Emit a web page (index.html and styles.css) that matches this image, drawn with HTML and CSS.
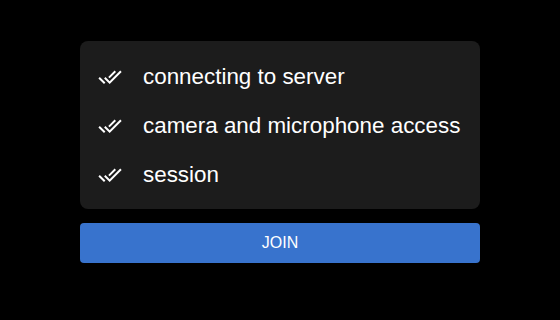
FILE: index.html
```html
<!DOCTYPE html>
<html>
<head>
<meta charset="utf-8">
<link rel="stylesheet" href="styles.css">
</head>
<body>
<div class="wrap">
  <div class="card">
    <div class="row">
      <svg class="icon" viewBox="0 0 24 24" width="24" height="24"><path fill="#fff" d="M18 7l-1.41-1.41-6.34 6.34 1.41 1.41L18 7zm4.24-1.41L11.66 16.17 7.48 12l-1.41 1.41L11.66 19l12-12-1.42-1.41zM.41 13.41L6 19l1.41-1.41L1.83 12 .41 13.41z"/></svg>
      <span class="label">connecting to server</span>
    </div>
    <div class="row">
      <svg class="icon" viewBox="0 0 24 24" width="24" height="24"><path fill="#fff" d="M18 7l-1.41-1.41-6.34 6.34 1.41 1.41L18 7zm4.24-1.41L11.66 16.17 7.48 12l-1.41 1.41L11.66 19l12-12-1.42-1.41zM.41 13.41L6 19l1.41-1.41L1.83 12 .41 13.41z"/></svg>
      <span class="label">camera and microphone access</span>
    </div>
    <div class="row">
      <svg class="icon" viewBox="0 0 24 24" width="24" height="24"><path fill="#fff" d="M18 7l-1.41-1.41-6.34 6.34 1.41 1.41L18 7zm4.24-1.41L11.66 16.17 7.48 12l-1.41 1.41L11.66 19l12-12-1.42-1.41zM.41 13.41L6 19l1.41-1.41L1.83 12 .41 13.41z"/></svg>
      <span class="label">session</span>
    </div>
  </div>
  <button class="join">JOIN</button>
</div>
</body>
</html>
```
FILE: styles.css
```css
html, body {
  margin: 0;
  padding: 0;
  background: #000;
  width: 560px;
  height: 320px;
  font-family: "Liberation Sans", Arial, sans-serif;
}
.wrap {
  width: 400px;
  margin: 0 auto;
  padding-top: 41px;
  display: flex;
  flex-direction: column;
  gap: 14px;
}
.card {
  background: #1c1c1c;
  border-radius: 8px;
  padding: 11px 18px 10px 18px;
  display: flex;
  flex-direction: column;
}
.row {
  height: 49px;
  display: flex;
  align-items: center;
  gap: 21px;
}
.icon {
  flex: none;
}
.label {
  color: #fff;
  font-size: 22.4px;
}
.join {
  height: 40px;
  border: none;
  border-radius: 4px;
  background: #3873cd;
  color: #fff;
  font-family: "Liberation Sans", Arial, sans-serif;
  font-size: 16px;
  padding: 0;
}
```
